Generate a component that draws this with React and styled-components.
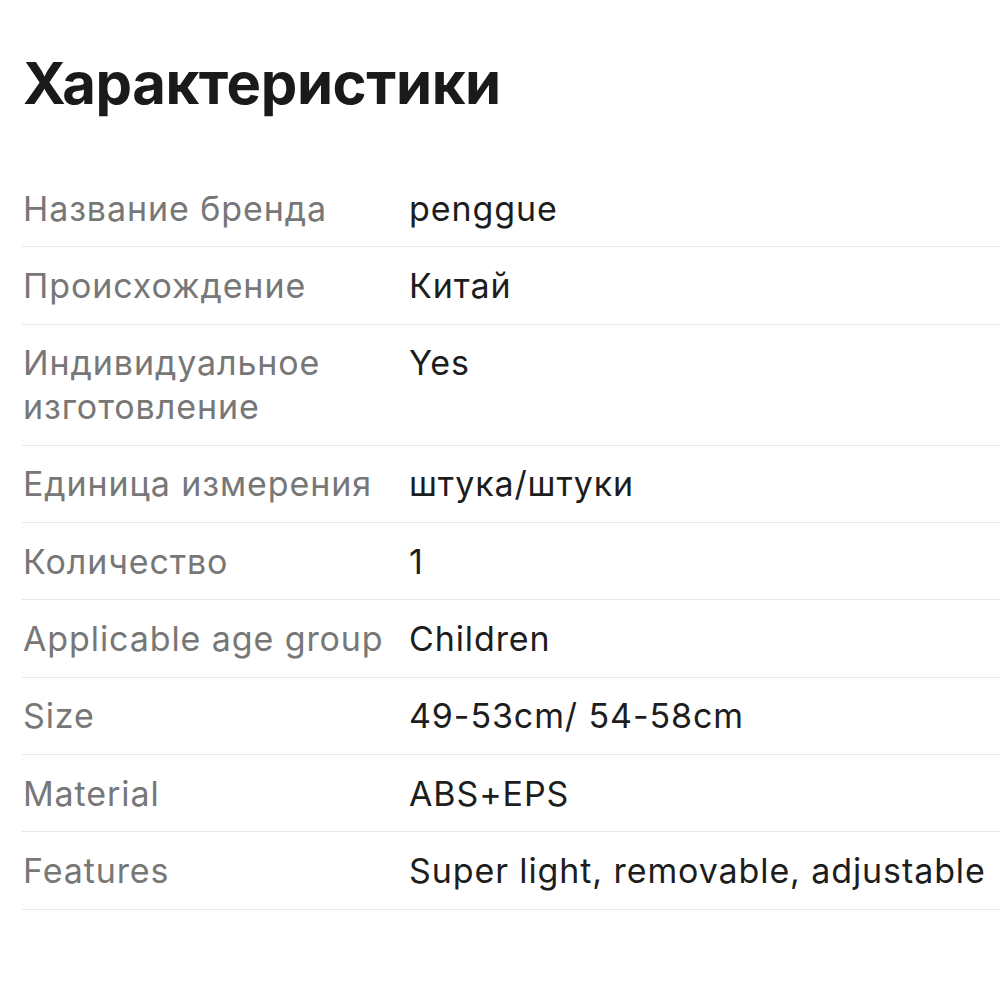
import styled, { createGlobalStyle } from "styled-components";

const GlobalStyle = createGlobalStyle`
    body {
        margin: 0;
        background: #fff;
        font-family: Inter, "Noto Sans", sans-serif;
    }
`

const Page = styled.div`
    padding: 47px 0 0 22px;
    overflow: hidden;
`

const Title = styled.h1`
    margin: 0 0 0 1px;
    font-size: 58px;
    font-weight: 700;
    line-height: 72px;
    color: #1a1a1a;
    letter-spacing: -0.4px;
`

const Table = styled.div`
    margin-top: 51px;
    width: 1000px;
`

const Row = styled.div`
    display: grid;
    grid-template-columns: 386px 1fr;
    padding: 16.5px 0 15.8px 1px;
    border-bottom: 1px solid #e8e8e8;
    font-size: 34px;
    line-height: 44px;
    letter-spacing: 0.9px;
`

const Label = styled.div`
    color: #777;
`

const Value = styled.div`
    color: #1d1d1d;
    white-space: nowrap;
`

const specs = [
    ["Название бренда", "penggue"],
    ["Происхождение", "Китай"],
    ["Индивидуальное изготовление", "Yes"],
    ["Единица измерения", "штука/штуки"],
    ["Количество", "1"],
    ["Applicable age group", "Children"],
    ["Size", "49-53cm/ 54-58cm"],
    ["Material", "ABS+EPS"],
    ["Features", "Super light, removable, adjustable"],
]

function App() {
    return (
    <Page>
        <GlobalStyle />
        <Title>Характеристики</Title>
        <Table>
            {specs.map(([label, value]) => (
                <Row key={label}>
                    <Label>{label}</Label>
                    <Value>{value}</Value>
                </Row>
            ))}
        </Table>
    </Page>
    )
}

export default App;
